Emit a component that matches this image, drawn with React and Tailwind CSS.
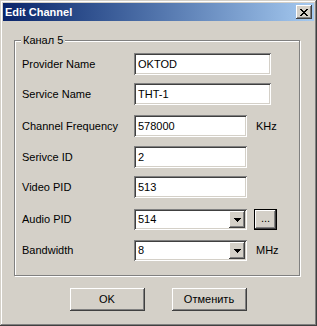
import React from 'react';

const sunken = 'shadow-[inset_1px_1px_#808080,inset_-1px_-1px_#ffffff,inset_2px_2px_#404040,inset_-2px_-2px_#d4d0c8]';
const raised = 'shadow-[inset_-1px_-1px_#404040,inset_1px_1px_#ffffff,inset_-2px_-2px_#808080,inset_2px_2px_#d4d0c8]';

function TextField({ value, width }) {
  return (
    <div className={`${width} h-[22px] bg-white ${sunken} flex items-center pl-[4px] text-[11px] text-black`}>
      {value}
    </div>
  );
}

function Combo({ value }) {
  return (
    <div className={`w-[113px] h-[21px] bg-white ${sunken} flex items-center pl-[4px] pr-[2px] text-[11px] text-black`}>
      <span className="flex-1">{value}</span>
      <div className={`w-[16px] h-[17px] bg-[#d4d0c8] ${raised} flex items-center justify-center`}>
        <svg width="7" height="4" viewBox="0 0 7 4" shapeRendering="crispEdges">
          <path d="M0 0h7v1H0zM1 1h5v1H1zM2 2h3v1H2zM3 3h1v1H3z" fill="#000" />
        </svg>
      </div>
    </div>
  );
}

function Row({ label, mt, children }) {
  return (
    <div className={`flex items-center ${mt}`}>
      <div className="w-[112px] text-[11px] text-black">{label}</div>
      {children}
    </div>
  );
}

function Button({ children }) {
  return (
    <div className={`w-[75px] h-[23px] bg-[#d4d0c8] ${raised} flex items-center justify-center text-[11px] text-black`}>
      {children}
    </div>
  );
}

export default function App() {
  return (
    <div className="w-[317px] h-[326px] bg-[#d4d0c8] p-[3px] flex flex-col font-['Liberation_Sans',Arial,sans-serif] shadow-[inset_-1px_-1px_#404040,inset_1px_1px_#d4d0c8,inset_-2px_-2px_#808080,inset_2px_2px_#ffffff]">
      <div className="h-[18px] bg-gradient-to-r from-[#0a246a] to-[#a6caf0] flex items-center pl-[2px] pr-[2px]">
        <span className="flex-1 text-white font-bold text-[11px]">Edit Channel</span>
        <div className={`w-[16px] h-[14px] bg-[#d4d0c8] ${raised} flex items-center justify-center`}>
          <svg width="8" height="7" viewBox="0 0 8 7" shapeRendering="crispEdges" className="mr-[1px]">
            <path d="M0 0h2v1H0zM6 0h2v1H6zM1 1h2v1H1zM5 1h2v1H5zM2 2h4v1H2zM3 3h2v1H3zM2 4h4v1H2zM1 5h2v1H1zM5 5h2v1H5zM0 6h2v1H0zM6 6h2v1H6z" fill="#000" />
          </svg>
        </div>
      </div>

      <div className="relative ml-[11px] mt-[19px] w-[286px] h-[236px] border border-[#808080] shadow-[inset_1px_1px_#ffffff,1px_1px_#ffffff] pl-[7px]">
        <span className="absolute left-[6px] top-[-8px] bg-[#d4d0c8] px-[2px] text-[11px] text-black leading-[14px]">Канал 5</span>
        <Row label="Provider Name" mt="mt-[12px]">
          <TextField value="OKTOD" width="w-[137px]" />
        </Row>
        <Row label="Service Name" mt="mt-[8px]">
          <TextField value="THT-1" width="w-[137px]" />
        </Row>
        <Row label="Channel Frequency" mt="mt-[10px]">
          <TextField value="578000" width="w-[113px]" />
          <span className="ml-[9px] text-[11px] text-black">KHz</span>
        </Row>
        <Row label="Serivce ID" mt="mt-[9px]">
          <TextField value="2" width="w-[113px]" />
        </Row>
        <Row label="Video PID" mt="mt-[8px]">
          <TextField value="513" width="w-[113px]" />
        </Row>
        <Row label="Audio PID" mt="mt-[11px]">
          <Combo value="514" />
          <div className="ml-[7px] w-[23px] h-[21px] border border-black">
            <div className={`w-full h-full bg-[#d4d0c8] ${raised} flex items-center justify-center text-[11px] text-black leading-none pb-[3px]`}>...</div>
          </div>
        </Row>
        <Row label="Bandwidth" mt="mt-[10px]">
          <Combo value="8" />
          <span className="ml-[9px] text-[11px] text-black">MHz</span>
        </Row>
      </div>

      <div className="flex justify-center gap-[27px] mt-[12px] pr-[1px]">
        <Button>OK</Button>
        <Button>Отменить</Button>
      </div>
    </div>
  );
}
